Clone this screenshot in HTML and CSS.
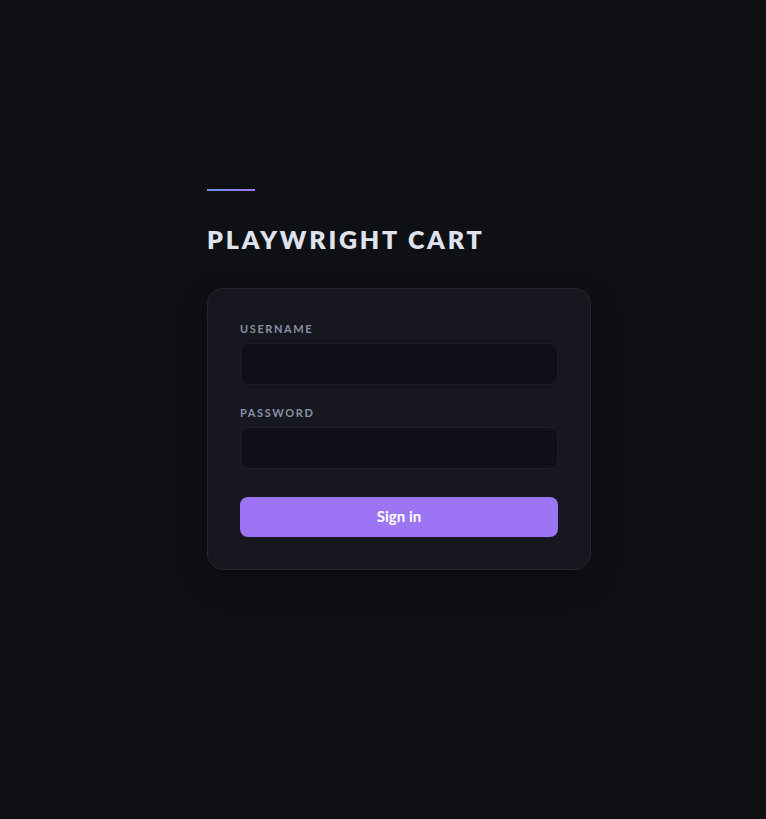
FILE: index.html
```html
<!DOCTYPE html>
<html lang="en">
<head>
<meta charset="utf-8">
<title>Playwright Cart</title>
<link rel="stylesheet" href="styles.css">
</head>
<body>
<main class="page">
  <div class="brand">
    <span class="accent"></span>
    <h1 class="title">PLAYWRIGHT CART</h1>
  </div>
  <form class="card">
    <label class="label" for="username">USERNAME</label>
    <input class="input" id="username" type="text">
    <label class="label label-2" for="password">PASSWORD</label>
    <input class="input" id="password" type="password">
    <button class="btn" type="button">Sign in</button>
  </form>
</main>
</body>
</html>
```
FILE: styles.css
```css
* { box-sizing: border-box; }
html, body {
  margin: 0;
  padding: 0;
  background: #0f1014;
  height: 100%;
}
body {
  font-family: "Lato", "Inter", sans-serif;
}
.page {
  display: flex;
  flex-direction: column;
  align-items: flex-start;
  padding: 189px 0 0 207px;
}
.brand {
  display: flex;
  flex-direction: column;
}
.accent {
  display: block;
  width: 48px;
  height: 2px;
  background: linear-gradient(90deg, #6a8fe8, #a274f2);
}
.title {
  margin: 33px 0 0;
  font-size: 25px;
  line-height: 30px;
  font-weight: 800;
  letter-spacing: 2.8px;
  color: #dfe2ec;
}
.card {
  margin-top: 34px;
  width: 384px;
  display: flex;
  flex-direction: column;
  padding: 33px 32px 32px;
  background: #17181f;
  border: 1px solid #23242f;
  border-radius: 16px;
  box-shadow: 0 12px 32px rgba(0, 0, 0, 0.25);
}
.label {
  font-size: 11px;
  line-height: 14px;
  font-weight: 700;
  letter-spacing: 1.6px;
  color: #8a8ea6;
}
.label-2 { margin-top: 21px; }
.input {
  margin-top: 7px;
  height: 42px;
  width: 100%;
  background: #101118;
  border: 1px solid #1d1e28;
  border-radius: 8px;
  outline: none;
  color: #dfe2ec;
  padding: 0 12px;
}
.btn {
  margin-top: 28px;
  height: 40px;
  width: 100%;
  border: none;
  border-radius: 8px;
  background: #9d74f4;
  color: #ffffff;
  font-family: inherit;
  font-size: 15px;
  line-height: 38px;
  font-weight: 700;
  padding: 0 0 2px;
}
```
